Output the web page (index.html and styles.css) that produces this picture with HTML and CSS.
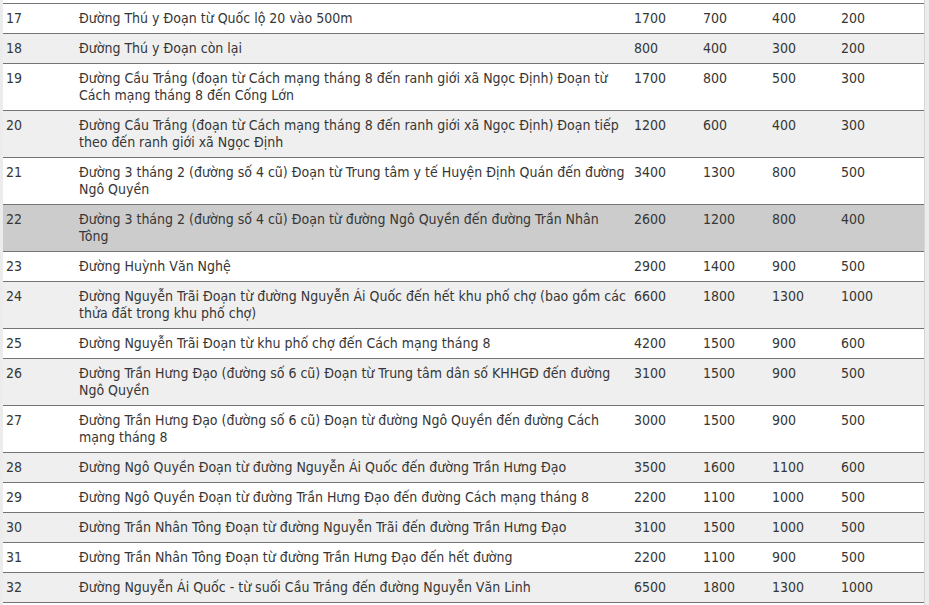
FILE: index.html
```html
<!DOCTYPE html>
<html lang="vi">
<head>
<meta charset="utf-8">
<title>Bảng giá đất</title>
<link rel="stylesheet" href="styles.css">
</head>
<body>
<div class="frame">
  <div class="sheet">
    <table class="prices">
      <colgroup>
        <col class="c-no"><col class="c-name"><col class="c-v"><col class="c-v"><col class="c-v"><col class="c-last">
      </colgroup>
      <tbody>
        <tr><td>17</td><td>Đường Thú y Đoạn từ Quốc lộ 20 vào 500m</td><td>1700</td><td>700</td><td>400</td><td>200</td></tr>
        <tr><td>18</td><td>Đường Thú y Đoạn còn lại</td><td>800</td><td>400</td><td>300</td><td>200</td></tr>
        <tr><td>19</td><td>Đường Cầu Trắng (đoạn từ Cách mạng tháng 8 đến ranh giới xã Ngọc Định) Đoạn từ Cách mạng tháng 8 đến Cống Lớn</td><td>1700</td><td>800</td><td>500</td><td>300</td></tr>
        <tr><td>20</td><td>Đường Cầu Trắng (đoạn từ Cách mạng tháng 8 đến ranh giới xã Ngọc Định) Đoạn tiếp theo đến ranh giới xã Ngọc Định</td><td>1200</td><td>600</td><td>400</td><td>300</td></tr>
        <tr><td>21</td><td>Đường 3 tháng 2 (đường số 4 cũ) Đoạn từ Trung tâm y tế Huyện Định Quán đến đường Ngô Quyền</td><td>3400</td><td>1300</td><td>800</td><td>500</td></tr>
        <tr class="active"><td>22</td><td>Đường 3 tháng 2 (đường số 4 cũ) Đoạn từ đường Ngô Quyền đến đường Trần Nhân Tông</td><td>2600</td><td>1200</td><td>800</td><td>400</td></tr>
        <tr><td>23</td><td>Đường Huỳnh Văn Nghệ</td><td>2900</td><td>1400</td><td>900</td><td>500</td></tr>
        <tr><td>24</td><td>Đường Nguyễn Trãi Đoạn từ đường Nguyễn Ái Quốc đến hết khu phố chợ (bao gồm các thửa đất trong khu phố chợ)</td><td>6600</td><td>1800</td><td>1300</td><td>1000</td></tr>
        <tr><td>25</td><td>Đường Nguyễn Trãi Đoạn từ khu phố chợ đến Cách mạng tháng 8</td><td>4200</td><td>1500</td><td>900</td><td>600</td></tr>
        <tr><td>26</td><td>Đường Trần Hưng Đạo (đường số 6 cũ) Đoạn từ Trung tâm dân số KHHGĐ đến đường Ngô Quyền</td><td>3100</td><td>1500</td><td>900</td><td>500</td></tr>
        <tr><td>27</td><td>Đường Trần Hưng Đạo (đường số 6 cũ) Đoạn từ đường Ngô Quyền đến đường Cách mạng tháng 8</td><td>3000</td><td>1500</td><td>900</td><td>500</td></tr>
        <tr><td>28</td><td>Đường Ngô Quyền Đoạn từ đường Nguyễn Ái Quốc đến đường Trần Hưng Đạo</td><td>3500</td><td>1600</td><td>1100</td><td>600</td></tr>
        <tr><td>29</td><td>Đường Ngô Quyền Đoạn từ đường Trần Hưng Đạo đến đường Cách mạng tháng 8</td><td>2200</td><td>1100</td><td>1000</td><td>500</td></tr>
        <tr><td>30</td><td>Đường Trần Nhân Tông Đoạn từ đường Nguyễn Trãi đến đường Trần Hưng Đạo</td><td>3100</td><td>1500</td><td>1000</td><td>500</td></tr>
        <tr><td>31</td><td>Đường Trần Nhân Tông Đoạn từ đường Trần Hưng Đạo đến hết đường</td><td>2200</td><td>1100</td><td>900</td><td>500</td></tr>
        <tr><td>32</td><td>Đường Nguyễn Ái Quốc - từ suối Cầu Trắng đến đường Nguyễn Văn Linh</td><td>6500</td><td>1800</td><td>1300</td><td>1000</td></tr>
      </tbody>
    </table>
  </div>
</div>
</body>
</html>
```
FILE: styles.css
```css
html, body {
  margin: 0;
  padding: 0;
  background: #ececec;
}

.frame {
  padding-left: 3px;
  height: 605px;
  overflow: hidden;
}

.sheet {
  width: 922px;
  min-height: 605px;
  padding-top: 3px;
  background: #ffffff;
  border-right: 1px solid #d6d6d6;
  box-sizing: border-box;
}

.prices {
  width: 921px;
  table-layout: fixed;
  border-collapse: collapse;
  font-family: "DejaVu Sans Condensed", "DejaVu Sans", Verdana, sans-serif;
  font-stretch: condensed;
  font-size: 14px;
  line-height: 17px;
  color: #363636;
}

.c-no { width: 73px; }
.c-name { width: 555px; }
.c-v { width: 69px; }
.c-last { width: 86px; }

.prices tr {
  border-top: 1px solid #747474;
  border-bottom: 1px solid #747474;
  background: #ffffff;
}

.prices tr:nth-child(even) {
  background: #efefef;
}

.prices tr.active {
  background: #cccccc;
}

.prices td {
  padding: 6px 3px;
  vertical-align: top;
  text-align: left;
}
```
